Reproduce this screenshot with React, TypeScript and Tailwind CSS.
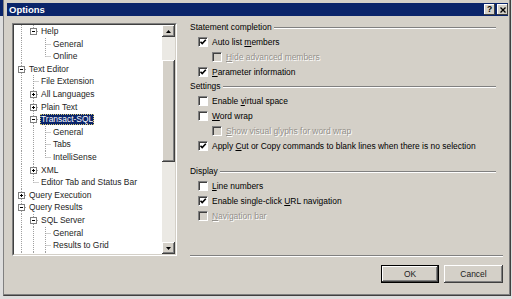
import type { ReactNode } from 'react'

type TreeRow = {
  label: string
  depth: number
  guides: boolean[]
  last?: boolean
  box?: 'plus' | 'minus'
  selected?: boolean
}

const rows: TreeRow[] = [
  { label: 'Help', depth: 1, guides: [true], last: true, box: 'minus' },
  { label: 'General', depth: 2, guides: [true, false] },
  { label: 'Online', depth: 2, guides: [true, false], last: true },
  { label: 'Text Editor', depth: 0, guides: [], box: 'minus' },
  { label: 'File Extension', depth: 1, guides: [true] },
  { label: 'All Languages', depth: 1, guides: [true], box: 'plus' },
  { label: 'Plain Text', depth: 1, guides: [true], box: 'plus' },
  { label: 'Transact-SQL', depth: 1, guides: [true], box: 'minus', selected: true },
  { label: 'General', depth: 2, guides: [true, true] },
  { label: 'Tabs', depth: 2, guides: [true, true] },
  { label: 'IntelliSense', depth: 2, guides: [true, true], last: true },
  { label: 'XML', depth: 1, guides: [true], box: 'plus' },
  { label: 'Editor Tab and Status Bar', depth: 1, guides: [true], last: true },
  { label: 'Query Execution', depth: 0, guides: [], box: 'plus' },
  { label: 'Query Results', depth: 0, guides: [], box: 'minus' },
  { label: 'SQL Server', depth: 1, guides: [true], box: 'minus' },
  { label: 'General', depth: 2, guides: [true, true] },
  { label: 'Results to Grid', depth: 2, guides: [true, true] },
  { label: 'Results to Text', depth: 2, guides: [true, true] },
]

// dotted connector lines + expand box for one tree row
function Guides({ row }: { row: TreeRow }) {
  const w = (row.depth + 1) * 12
  const base = row.depth * 12
  const cx = base + 6.5
  const dot = { stroke: '#a0a0a0', strokeWidth: 1, strokeDasharray: '1 1' }
  return (
    <svg width={w} height="100%" className="shrink-0 h-full">
      {row.guides.map((on, i) =>
        on ? <line key={i} x1={i * 12 + 6.5} y1={0} x2={i * 12 + 6.5} y2={14} {...dot} /> : null
      )}
      {row.box ? (
        <>
          <line x1={cx} y1={0} x2={cx} y2={3} {...dot} />
          {!row.last && <line x1={cx} y1={10} x2={cx} y2={14} {...dot} />}
          <line x1={base + 10} y1={6.5} x2={w} y2={6.5} {...dot} />
          <rect x={base + 3.5} y={3.5} width={6} height={6} fill="#fff" stroke="#808080" />
          <rect x={base + 5} y={6} width={3} height={1} fill="#000" />
          {row.box === 'plus' && <rect x={base + 6} y={5} width={1} height={3} fill="#000" />}
        </>
      ) : (
        <>
          <line x1={cx} y1={0} x2={cx} y2={row.last ? 6.5 : 14} {...dot} />
          <line x1={cx} y1={6.5} x2={w} y2={6.5} {...dot} />
        </>
      )}
    </svg>
  )
}

function Arrow({ up }: { up?: boolean }) {
  return (
    <svg width="5" height="3">
      <polygon points={up ? '2.5,0 5,3 0,3' : '0,0 5,0 2.5,3'} fill="#000" />
    </svg>
  )
}

function Header({ title }: { title: string }) {
  return (
    <div className="h-[14.8px] flex items-center">
      <span>{title}</span>
      <div className="flex-1 ml-[2px] mr-[7px] mt-[1px] h-[2px] border-t border-b border-t-[#808080] border-b-white" />
    </div>
  )
}

function Check({
  children,
  checked,
  disabled,
  sub,
}: {
  children: ReactNode
  checked?: boolean
  disabled?: boolean
  sub?: boolean
}) {
  return (
    <div className={sub ? 'h-[14.8px] flex items-center pl-[22px]' : 'h-[14.8px] flex items-center pl-[8px]'}>
      <div
        className={
          disabled
            ? 'w-[10px] h-[10px] shrink-0 border border-t-[#808080] border-l-[#808080] border-r-white border-b-white bg-[#d4d0c8] shadow-[inset_1px_1px_#404040]'
            : 'w-[10px] h-[10px] shrink-0 border border-t-[#808080] border-l-[#808080] border-r-white border-b-white bg-white shadow-[inset_1px_1px_#404040] flex items-center justify-center'
        }
      >
        {checked && (
          <svg width="8" height="8">
            <polyline points="1.5,3.8 3.2,5.6 6.8,1.8" fill="none" stroke="#000" strokeWidth="1.6" />
          </svg>
        )}
      </div>
      <span
        className={
          disabled
            ? 'ml-[4px] whitespace-nowrap text-[#94918c] [text-shadow:1px_1px_0_#fff]'
            : 'ml-[4px] whitespace-nowrap text-black'
        }
      >
        {children}
      </span>
    </div>
  )
}

export default function App() {
  return (
    <div className="flex w-[512px] h-[299px] overflow-hidden bg-[#dedede] font-['Liberation_Sans',Arial,sans-serif] text-[8.45px] leading-none">
      <div className="w-[3px] flex flex-col">
        <div className="h-[16px] bg-[#0a246a]" />
      </div>

      {/* dialog window */}
      <div className="w-[508px] h-[296px] flex flex-col bg-[#d4d0c8] border-l border-r border-b border-l-[#808080] border-r-[#404040] border-b-[#404040] shadow-[inset_-1px_-1px_#808080] pt-[3px] pl-[3px] pr-[2px]">
        <div className="h-[13px] shrink-0 bg-[#0a246a] flex items-center justify-between pl-[2px]">
          <span className="text-white font-bold text-[9.5px]">Options</span>
          <div className="flex gap-[2px]">
            <div className="w-[11px] h-[11px] bg-[#d4d0c8] shadow-[inset_-1px_-1px_#404040,inset_1px_1px_#fff] flex items-center justify-center text-[8.5px] font-bold text-black">
              ?
            </div>
            <div className="w-[11px] h-[11px] bg-[#d4d0c8] shadow-[inset_-1px_-1px_#404040,inset_1px_1px_#fff] flex items-center justify-center">
              <svg width="6" height="6">
                <path d="M0.5 0.5 L5.5 5.5 M5.5 0.5 L0.5 5.5" stroke="#000" strokeWidth="1.3" />
              </svg>
            </div>
          </div>
        </div>

        <div className="flex flex-1">
          {/* tree */}
          <div className="w-[165px] h-[233px] mt-[7px] ml-[5px] border border-t-[#808080] border-l-[#808080] border-r-white border-b-white">
            <div className="w-full h-full flex border border-t-[#404040] border-l-[#404040] border-r-[#d4d0c8] border-b-[#d4d0c8] bg-white">
              <div className="flex-1 overflow-hidden pl-[1px] text-[#1e1e1e]">
                {rows.map((row, i) => (
                  <div key={i} className="h-[12.6px] flex items-center whitespace-nowrap">
                    <Guides row={row} />
                    {row.selected ? (
                      <span className="ml-[1px] px-[1px] h-[11px] flex items-center bg-[#0a246a] text-white outline-1 outline-dotted outline-[#d8c870] -outline-offset-1">
                        {row.label}
                      </span>
                    ) : (
                      <span className="ml-[1px] px-[1px]">{row.label}</span>
                    )}
                  </div>
                ))}
              </div>
              <div className="w-[13px] flex flex-col bg-[#ebe9e4]">
                <div className="h-[12px] bg-[#d4d0c8] shadow-[inset_-1px_-1px_#404040,inset_1px_1px_#fff,inset_-2px_-2px_#808080] flex items-center justify-center">
                  <Arrow up />
                </div>
                <div className="h-[23px]" />
                <div className="h-[102px] bg-[#d4d0c8] shadow-[inset_-1px_-1px_#404040,inset_1px_1px_#fff,inset_-2px_-2px_#808080]" />
                <div className="flex-1" />
                <div className="h-[12px] bg-[#d4d0c8] shadow-[inset_-1px_-1px_#404040,inset_1px_1px_#fff,inset_-2px_-2px_#808080] flex items-center justify-center">
                  <Arrow />
                </div>
              </div>
            </div>
          </div>

          {/* settings */}
          <div className="ml-[13px] w-[313px] flex flex-col pt-[4px] text-black">
            <Header title="Statement completion" />
            <Check checked>
              Auto list <u>m</u>embers
            </Check>
            <Check sub disabled>
              <u>H</u>ide advanced members
            </Check>
            <Check checked>
              <u>P</u>arameter information
            </Check>
            <Header title="Settings" />
            <Check>
              Enable <u>v</u>irtual space
            </Check>
            <Check>
              <u>W</u>ord wrap
            </Check>
            <Check sub disabled>
              <u>S</u>how visual glyphs for word wrap
            </Check>
            <Check checked>
              Apply <u>C</u>ut or Copy commands to blank lines when there is no selection
            </Check>
            <div className="h-[11px]" />
            <Header title="Display" />
            <Check>
              <u>L</u>ine numbers
            </Check>
            <Check checked>
              Enable single-click <u>U</u>RL navigation
            </Check>
            <Check disabled>
              <u>N</u>avigation bar
            </Check>

            <div className="mt-[32px] h-[2px] border-t border-b border-t-[#808080] border-b-white" />
            <div className="mt-[8px] flex justify-end gap-[5px]">
              <button className="w-[58px] h-[18px] border border-black bg-[#d4d0c8] shadow-[inset_-1px_-1px_#404040,inset_1px_1px_#fff,inset_-2px_-2px_#808080] text-[#222]">
                OK
              </button>
              <button className="w-[59px] h-[18px] bg-[#d4d0c8] shadow-[inset_-1px_-1px_#404040,inset_1px_1px_#fff,inset_-2px_-2px_#808080] text-[#222]">
                Cancel
              </button>
            </div>
          </div>
        </div>
      </div>
    </div>
  )
}
